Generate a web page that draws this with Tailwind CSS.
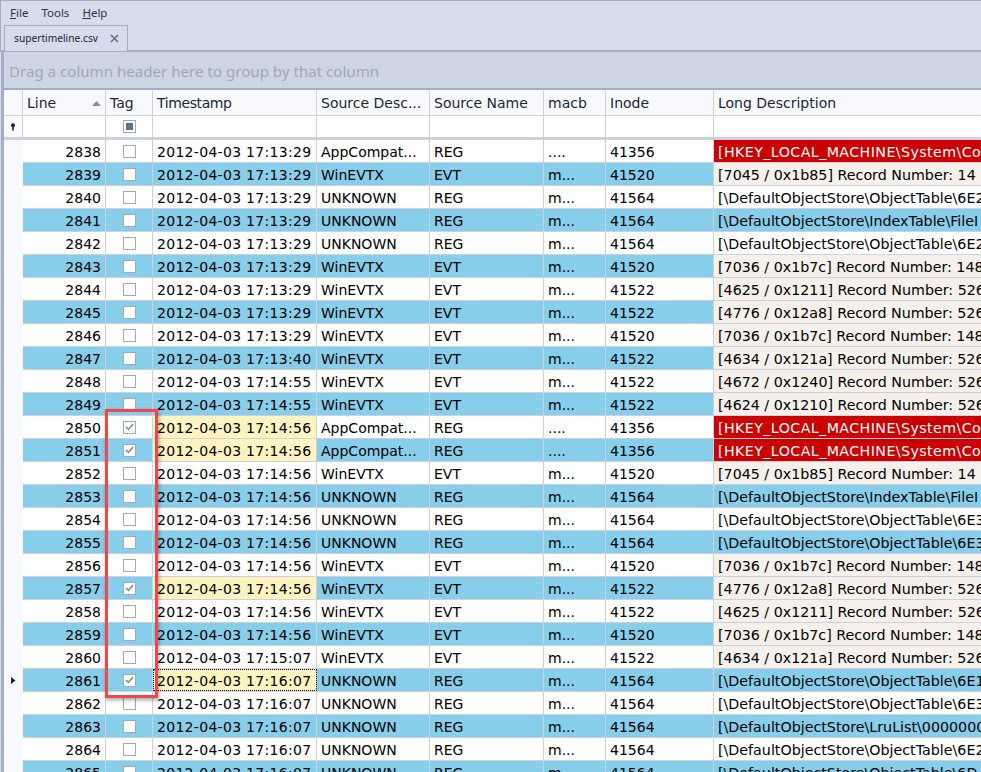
<!DOCTYPE html>
<html lang="en">
<head>
    <meta charset="UTF-8">
    <title>supertimeline.csv</title>
    <script src="https://cdn.jsdelivr.net/npm/@tailwindcss/browser@4"></script>
</head>
<body class="bg-white">
<div class="relative w-[981px] h-[772px] overflow-hidden bg-[#d6dce9] font-['DejaVu_Sans',sans-serif] text-[14px] text-black">
    <!-- Menu bar -->
    <div class="h-[25px] flex items-center gap-[13px] pl-[9px] border-t border-l border-[#a5adc4] font-['Noto_Sans',sans-serif] text-[11.5px] text-[#2b3548]">
        <span><u>F</u>ile</span>
        <span>Tools</span>
        <span><u>H</u>elp</span>
    </div>

    <!-- Tab strip -->
    <div class="h-[27px] pl-[3px] border-b-2 border-[#a5adc4] border-l border-l-[#a5adc4]">
        <div class="w-[124px] h-[26px] flex items-center justify-between pl-[9px] pr-[8px] bg-[#d6dce9] border border-b-0 border-[#a5adc4] font-['Noto_Sans',sans-serif] text-[10.2px] text-[#1c2638]">
            <span>supertimeline.csv</span>
            <svg width="9" height="9" viewBox="0 0 9 9"><path d="M1 1 L8 8 M8 1 L1 8" stroke="#66728a" stroke-width="1.6" fill="none"/></svg>
        </div>
    </div>

    <div class="h-[720px] ml-[1px] border-l-[3px] border-[#a5adc4]">
        <!-- Group panel -->
        <div class="h-[38px] flex items-center pl-[5px] pt-[3px] bg-[#cdd5e4] border-b-2 border-[#a5adc4] font-['Noto_Sans',sans-serif] text-[15.1px] text-[#9ea8ba]">Drag a column header here to group by that column</div>

        <!-- Column headers -->
        <div class="flex h-[26px] pt-[1px] bg-[#f7f9fd] border-b border-[#ccd0e0] text-[#1c2638]">
            <div class="w-[19px] shrink-0 border-r border-[#ccd0e0]"></div>
            <div class="w-[83px] shrink-0 flex items-center justify-between pl-[4px] pr-[4px] border-r border-[#ccd0e0]">Line
                <svg width="9" height="5" viewBox="0 0 9 5"><path d="M4.5 0 L9 5 L0 5 Z" fill="#8a8f9c"/></svg>
            </div>
            <div class="w-[47px] shrink-0 flex items-center pl-[4px] border-r border-[#ccd0e0]">Tag</div>
            <div class="w-[164px] shrink-0 flex items-center pl-[4px] tracking-[-0.4px] border-r border-[#ccd0e0]">Timestamp</div>
            <div class="w-[113px] shrink-0 flex items-center pl-[4px] border-r border-[#ccd0e0] overflow-hidden whitespace-nowrap">Source Desc...</div>
            <div class="w-[114px] shrink-0 flex items-center pl-[4px] border-r border-[#ccd0e0]">Source Name</div>
            <div class="w-[62px] shrink-0 flex items-center pl-[4px] border-r border-[#ccd0e0]">macb</div>
            <div class="w-[108px] shrink-0 flex items-center pl-[4px] border-r border-[#ccd0e0]">Inode</div>
            <div class="flex-1 flex items-center pl-[4px]">Long Description</div>
        </div>

        <!-- Auto filter row -->
        <div class="flex h-[24px] bg-white border-b-[3px] border-[#ccd0e0]">
            <div class="w-[19px] shrink-0 flex items-center justify-center border-r border-[#ccd0e0] bg-[#f7f9fd]">
                <svg width="6" height="8" viewBox="0 0 6 8"><circle cx="3" cy="2.2" r="2" fill="#1c2638"/><rect x="2.2" y="3" width="1.6" height="4.5" fill="#1c2638"/></svg>
            </div>
            <div class="w-[83px] shrink-0 border-r border-[#ccd0e0]"></div>
            <div class="w-[47px] shrink-0 flex items-center justify-center border-r border-[#ccd0e0]">
                <span class="w-[13px] h-[13px] flex items-center justify-center bg-white border border-[#a3a9ba]"><span class="w-[7px] h-[7px] bg-[#5f6f8e]"></span></span>
            </div>
            <div class="w-[164px] shrink-0 border-r border-[#ccd0e0]"></div>
            <div class="w-[113px] shrink-0 border-r border-[#ccd0e0]"></div>
            <div class="w-[114px] shrink-0 border-r border-[#ccd0e0]"></div>
            <div class="w-[62px] shrink-0 border-r border-[#ccd0e0]"></div>
            <div class="w-[108px] shrink-0 border-r border-[#ccd0e0]"></div>
            <div class="flex-1"></div>
        </div>

        <!-- Rows go here -->
        <div id="rows"></div>
    </div>

    <!-- Red highlight drawn over the Tag column -->
    <div class="absolute left-[105px] top-[409px] w-[53px] h-[289px] border-[3px] border-[#f04848] shadow-[1px_2px_4px_rgba(0,0,0,0.35)] pointer-events-none"></div>
</div>

<script>
    const APP = ['AppCompat...', 'REG', '....', '41356', '[HKEY_LOCAL_MACHINE\\System\\Co'];
    const obj = (suffix, inode) => ['UNKNOWN', 'REG', 'm...', inode || '41564', '[\\DefaultObjectStore\\' + suffix];
    const evt = (code, rec, inode) => ['WinEVTX', 'EVT', 'm...', inode, '[' + code + '] Record Number: ' + rec];

    const rows = [
        [2838, '17:13:29', APP],
        [2839, '17:13:29', evt('7045 / 0x1b85', '14', '41520')],
        [2840, '17:13:29', obj('ObjectTable\\6E2')],
        [2841, '17:13:29', obj('IndexTable\\FileI')],
        [2842, '17:13:29', obj('ObjectTable\\6E2')],
        [2843, '17:13:29', evt('7036 / 0x1b7c', '148', '41520')],
        [2844, '17:13:29', evt('4625 / 0x1211', '526', '41522')],
        [2845, '17:13:29', evt('4776 / 0x12a8', '526', '41522')],
        [2846, '17:13:29', evt('7036 / 0x1b7c', '148', '41520')],
        [2847, '17:13:40', evt('4634 / 0x121a', '526', '41522')],
        [2848, '17:14:55', evt('4672 / 0x1240', '526', '41522')],
        [2849, '17:14:55', evt('4624 / 0x1210', '526', '41522')],
        [2850, '17:14:56', APP, true],
        [2851, '17:14:56', APP, true],
        [2852, '17:14:56', evt('7045 / 0x1b85', '14', '41520')],
        [2853, '17:14:56', obj('IndexTable\\FileI')],
        [2854, '17:14:56', obj('ObjectTable\\6E3')],
        [2855, '17:14:56', obj('ObjectTable\\6E3')],
        [2856, '17:14:56', evt('7036 / 0x1b7c', '148', '41520')],
        [2857, '17:14:56', evt('4776 / 0x12a8', '526', '41522'), true],
        [2858, '17:14:56', evt('4625 / 0x1211', '526', '41522')],
        [2859, '17:14:56', evt('7036 / 0x1b7c', '148', '41520')],
        [2860, '17:15:07', evt('4634 / 0x121a', '526', '41522')],
        [2861, '17:16:07', obj('ObjectTable\\6E1'), true, true],
        [2862, '17:16:07', obj('ObjectTable\\6E3')],
        [2863, '17:16:07', obj('LruList\\0000000')],
        [2864, '17:16:07', obj('ObjectTable\\6E2')],
        [2865, '17:16:07', obj('ObjectTable\\6D')]
    ];

    const cell = 'shrink-0 flex items-center pt-[2px] whitespace-nowrap overflow-hidden border-r border-[#ccd0e0]';
    const box = 'w-[13px] h-[13px] -mt-[2px] flex items-center justify-center bg-white border border-[#a3a9ba]';
    const tick = '<svg width="9" height="8" viewBox="0 0 9 8"><path d="M1 4 L3.5 6.5 L8 1" stroke="#7d879c" stroke-width="1.5" fill="none"/></svg>';
    const arrow = '<svg width="5" height="7" viewBox="0 0 5 7"><path d="M0 0 L4.5 3.5 L0 7 Z" fill="#1c2638"/></svg>';

    // Render grid rows
    document.getElementById('rows').innerHTML = rows.map(([line, time, d, tagged, focused], i) => {
        const blue = i % 2 === 1;
        const rowBg = blue ? 'bg-[#87ceeb]' : 'bg-white';
        const isReg = d[0] === 'AppCompat...';
        const isEvt = d[1] === 'EVT';
        const longBg = isReg ? 'bg-[#cc0000] text-white tracking-[0.4px]' : isEvt ? 'bg-[#f5f0e9]' : rowBg;
        const timeBg = tagged ? 'bg-[#fff3bf]' : '';
        const focus = focused ? 'outline-1 outline-dotted outline-black -outline-offset-1' : '';
        return `
            <div class="flex h-[23px]">
                <div class="w-[19px] shrink-0 flex items-center justify-center bg-[#f7f9fd] border-r border-b border-[#f7f9fd]">${focused ? arrow : ''}</div>
                <div class="flex flex-1 border-b border-[#ccd0e0] ${rowBg}">
                    <div class="${cell} w-[83px] justify-end pr-[4px]">${line}</div>
                    <div class="${cell} w-[47px] justify-center"><span class="${box}">${tagged ? tick : ''}</span></div>
                    <div class="${cell} w-[164px] pl-[4px] tracking-[0.3px] ${timeBg} ${focus}">2012-04-03 ${time}</div>
                    <div class="${cell} w-[113px] pl-[4px]">${d[0]}</div>
                    <div class="${cell} w-[114px] pl-[4px]">${d[1]}</div>
                    <div class="${cell} w-[62px] pl-[4px]">${d[2]}</div>
                    <div class="${cell} w-[108px] pl-[4px]">${d[3]}</div>
                    <div class="flex flex-1 items-center pt-[3px] whitespace-nowrap overflow-hidden pl-[4px] text-[14.25px] ${longBg}">${d[4]}</div>
                </div>
            </div>`;
    }).join('');
</script>
</body>
</html>
